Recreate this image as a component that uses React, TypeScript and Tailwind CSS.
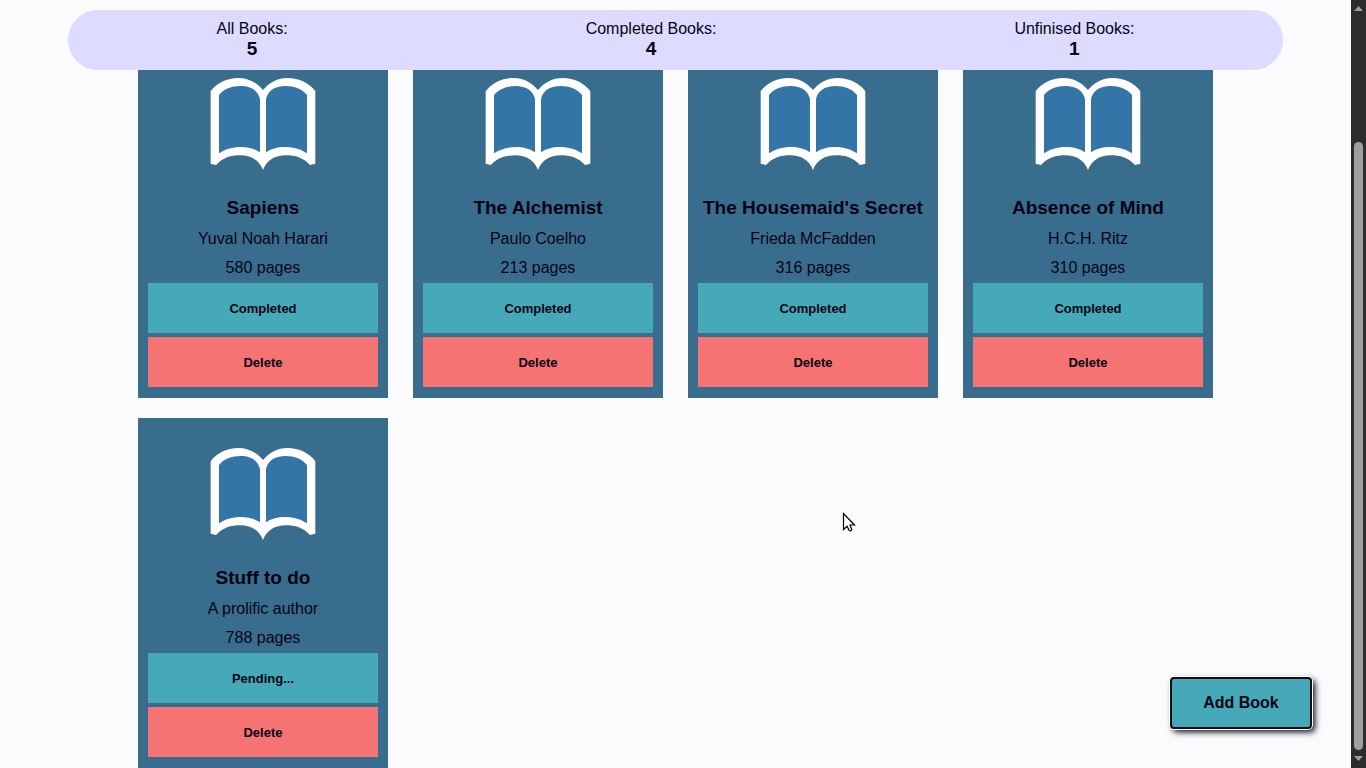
type Book = { title: string; author: string; pages: number; done: boolean };

const books: Book[] = [
  { title: "Sapiens", author: "Yuval Noah Harari", pages: 580, done: true },
  { title: "The Alchemist", author: "Paulo Coelho", pages: 213, done: true },
  { title: "The Housemaid's Secret", author: "Frieda McFadden", pages: 316, done: true },
  { title: "Absence of Mind", author: "H.C.H. Ritz", pages: 310, done: true },
  { title: "Stuff to do", author: "A prolific author", pages: 788, done: false },
];

function BookIcon() {
  return (
    <svg width="106" height="93" viewBox="45 51 318 279" aria-hidden="true">
      <path
        fill="#ffffff"
        d="M47 94C65 69 96 54 130 54C160 54 186 68 204 90C222 68 248 54 278 54C312 54 343 69 361 94V311L345 315C325 293 300 286 272 286C240 286 215 301 204 330C193 301 168 286 136 286C108 286 83 293 63 315L47 311Z"
      />
      <path
        fill="#3475a7"
        d="M72 105C86 87 110 78 136 78C170 78 190 93 195 118V277C182 267 160 261 138 261C112 261 89 268 72 280Z"
      />
      <path
        fill="#3475a7"
        d="M336 105C322 87 298 78 272 78C238 78 218 93 213 118V277C226 267 248 261 270 261C296 261 319 268 336 280Z"
      />
    </svg>
  );
}

function Stat({ label, value }: { label: string; value: number }) {
  return (
    <div className="text-center">
      <p className="text-base leading-[18px]">{label}</p>
      <p className="text-[19px] leading-[22px] font-bold">{value}</p>
    </div>
  );
}

function BookCard({ book }: { book: Book }) {
  return (
    <article className="flex flex-col items-center bg-[#396d8d] px-2.5 pt-[29px] pb-[11px] text-center">
      <BookIcon />
      <h2 className="mt-[27px] text-[19px] leading-[22px] font-bold whitespace-nowrap">{book.title}</h2>
      <p className="mt-[11px] text-base leading-[18px]">{book.author}</p>
      <p className="mt-[11px] text-base leading-[18px]">{book.pages} pages</p>
      <button type="button" className="mt-1.5 h-[50px] w-full bg-[#45a9b8] pt-0.5 text-[13px] leading-4 font-bold">
        {book.done ? "Completed" : "Pending..."}
      </button>
      <button type="button" className="mt-1 h-[50px] w-full bg-[#f57373] pt-0.5 text-[13px] leading-4 font-bold">
        Delete
      </button>
    </article>
  );
}

function Scrollbar() {
  return (
    <div className="flex w-[15px] shrink-0 flex-col items-center bg-[#2c2c2c] pt-1.5 pb-[7px]" aria-hidden="true">
      <svg width="9" height="5" viewBox="0 0 9 5">
        <path d="M0 5L4.500 0L9 5Z" fill="#9f9f9f" />
      </svg>
      <div className="mt-[131px] mb-1.5 w-[9px] grow rounded-full bg-[#9f9f9f]" />
      <svg width="9" height="5" viewBox="0 0 9 5">
        <path d="M0 0L4.500 5L9 0Z" fill="#9f9f9f" />
      </svg>
    </div>
  );
}

export default function App() {
  const finished = books.filter((book) => book.done).length;
  return (
    <div className="flex h-screen overflow-hidden bg-[#fbfbfe] font-['Liberation_Sans',Arial,sans-serif] text-[#050315]">
      <div className="relative min-w-0 grow overflow-hidden">
        <header className="absolute inset-x-0 top-2.5 z-10 mx-auto flex h-[60px] w-[90%] items-center justify-around rounded-[30px] bg-[#dddbff]">
          <Stat label="All Books:" value={books.length} />
          <Stat label="Completed Books:" value={finished} />
          <Stat label="Unfinised Books:" value={books.length - finished} />
        </header>
        <main className="mx-auto grid w-4/5 grid-cols-[repeat(auto-fill,250px)] justify-center gap-x-[25px] gap-y-5 pt-12">
          {books.map((book) => (
            <BookCard key={book.title} book={book} />
          ))}
        </main>
        <button
          type="button"
          className="absolute right-[39px] bottom-[39px] h-[52px] w-[142px] rounded border-2 border-[#101010] bg-[#45a9b8] text-base font-bold shadow-[0_0_0_1px_#ffffff,3px_3px_6px_#050315]"
        >
          Add Book
        </button>
        <svg
          className="absolute top-[512px] left-[842px]"
          width="14"
          height="21"
          viewBox="0 0 14 21"
          aria-hidden="true"
        >
          <path
            d="M1.500 1.500V17.500L5 14.200L7.300 18.500Q8.800 19.500 9.800 17.800L8 13H12.500Z"
            fill="#ffffff"
            stroke="#000000"
            strokeWidth="1.200"
          />
        </svg>
      </div>
      <Scrollbar />
    </div>
  );
}
